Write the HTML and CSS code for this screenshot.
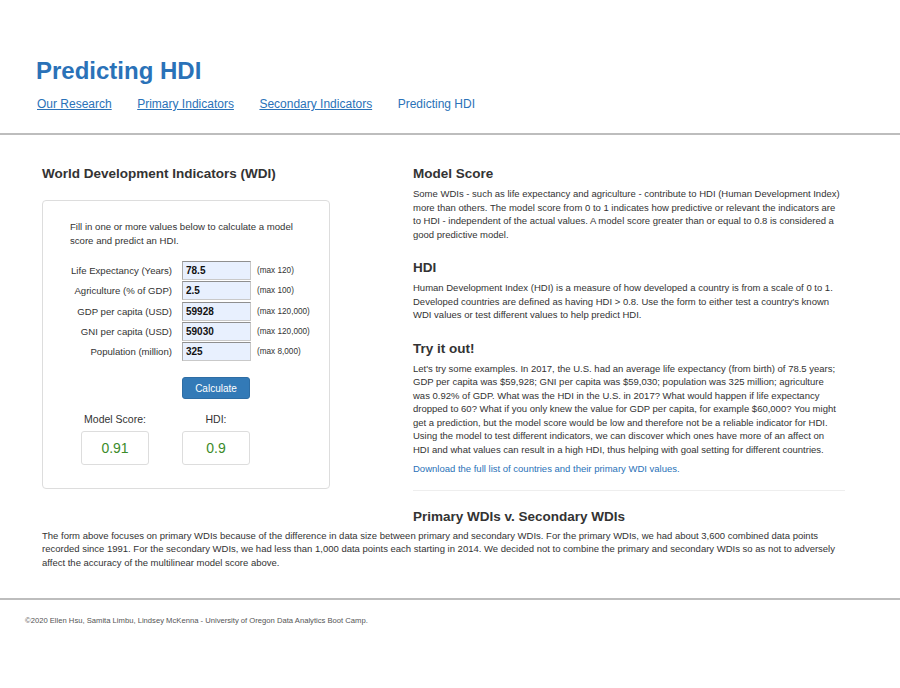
FILE: index.html
```html
<!DOCTYPE html>
<html lang="en">
<head>
<meta charset="utf-8">
<title>Predicting HDI</title>
<link rel="stylesheet" href="styles.css">
</head>
<body>
<header class="site-header">
  <h1 class="site-title">Predicting HDI</h1>
  <nav class="site-nav">
    <a href="#" class="nav-link">Our Research</a>
    <a href="#" class="nav-link">Primary Indicators</a>
    <a href="#" class="nav-link">Secondary Indicators</a>
    <a href="#" class="nav-link active">Predicting HDI</a>
  </nav>
</header>
<hr class="rule">
<main class="main">
  <div class="columns">
    <section class="left-col">
      <h3 class="heading">World Development Indicators (WDI)</h3>
      <div class="card">
        <p class="card-intro">Fill in one or more values below to calculate a model score and predict an HDI.</p>
        <form class="wdi-form">
          <label class="field-label">Life Expectancy (Years)</label>
          <input class="field-input" value="78.5">
          <span class="field-max">(max 120)</span>
          <label class="field-label">Agriculture (% of GDP)</label>
          <input class="field-input" value="2.5">
          <span class="field-max">(max 100)</span>
          <label class="field-label">GDP per capita (USD)</label>
          <input class="field-input" value="59928">
          <span class="field-max">(max 120,000)</span>
          <label class="field-label">GNI per capita (USD)</label>
          <input class="field-input" value="59030">
          <span class="field-max">(max 120,000)</span>
          <label class="field-label">Population (million)</label>
          <input class="field-input" value="325">
          <span class="field-max">(max 8,000)</span>
        </form>
        <button class="calc-btn" type="button">Calculate</button>
        <div class="results">
          <div class="result">
            <div class="result-label">Model Score:</div>
            <div class="result-box">0.91</div>
          </div>
          <div class="result">
            <div class="result-label">HDI:</div>
            <div class="result-box">0.9</div>
          </div>
        </div>
      </div>
    </section>
    <section class="right-col">
      <h3 class="heading">Model Score</h3>
      <p class="text">Some WDIs - such as life expectancy and agriculture - contribute to HDI (Human Development Index) more than others. The model score from 0 to 1 indicates how predictive or relevant the indicators are to HDI - independent of the actual values. A model score greater than or equal to 0.8 is considered a good predictive model.</p>
      <h3 class="heading spaced">HDI</h3>
      <p class="text">Human Development Index (HDI) is a measure of how developed a country is from a scale of 0 to 1. Developed countries are defined as having HDI &gt; 0.8. Use the form to either test a country's known WDI values or test different values to help predict HDI.</p>
      <h3 class="heading spaced">Try it out!</h3>
      <p class="text">Let's try some examples. In 2017, the U.S. had an average life expectancy (from birth) of 78.5 years; GDP per capita was $59,928; GNI per capita was $59,030; population was 325 million; agriculture was 0.92% of GDP. What was the HDI in the U.S. in 2017? What would happen if life expectancy dropped to 60? What if you only knew the value for GDP per capita, for example $60,000? You might get a prediction, but the model score would be low and therefore not be a reliable indicator for HDI. Using the model to test different indicators, we can discover which ones have more of an affect on HDI and what values can result in a high HDI, thus helping with goal setting for different countries.</p>
      <p class="text download"><a href="#" class="download-link">Download the full list of countries and their primary WDI values.</a></p>
      <hr class="divider">
      <h3 class="heading">Primary WDIs v. Secondary WDIs</h3>
    </section>
  </div>
  <p class="text wide">The form above focuses on primary WDIs because of the difference in data size between primary and secondary WDIs. For the primary WDIs, we had about 3,600 combined data points recorded since 1991. For the secondary WDIs, we had less than 1,000 data points each starting in 2014. We decided not to combine the primary and secondary WDIs so as not to adversely affect the accuracy of the multilinear model score above.</p>
</main>
<hr class="rule footer-rule">
<footer class="footer">©2020 Ellen Hsu, Samita Limbu, Lindsey McKenna - University of Oregon Data Analytics Boot Camp.</footer>
</body>
</html>
```
FILE: styles.css
```css
* { box-sizing: border-box; }
body {
  margin: 0;
  font-family: "Liberation Sans", Arial, sans-serif;
  color: #333;
  background: #fff;
}
.site-header {
  padding: 57px 0 0 36px;
}
.site-title {
  margin: 0;
  font-size: 24px;
  line-height: 28px;
  font-weight: bold;
  color: #2a72b8;
}
.site-nav {
  display: flex;
  gap: 25.5px;
  margin-top: 11px;
  padding-left: 1px;
}
.nav-link {
  font-size: 12px;
  line-height: 16px;
  color: #2a72b8;
  text-decoration: underline;
}
.nav-link.active { text-decoration: none; }
.rule {
  margin: 21px 0 0;
  border: 0;
  border-top: 2px solid #bdbdbd;
  height: 0;
}
.main {
  padding: 30px 0 0 42px;
  width: 848px;
}
.columns {
  display: flex;
  gap: 83px;
}
.left-col { width: 288px; flex: none; }
.right-col { width: 429px; flex: none; }
.heading {
  margin: 0;
  font-size: 13.5px;
  line-height: 18px;
  font-weight: bold;
  color: #333;
}
.heading.spaced { margin-top: 18px; }
.left-col .heading { margin-bottom: 17px; }
.card {
  border: 1px solid #ddd;
  border-radius: 4px;
  padding: 19px 10px 22px 27px;
  height: 289px;
}
.card-intro {
  margin: 0;
  font-size: 9.6px;
  line-height: 14px;
  color: #333;
  width: 232px;
}
.wdi-form {
  display: grid;
  grid-template-columns: 102px 69px auto;
  column-gap: 10px;
  row-gap: 1.3px;
  margin-top: 13px;
  align-items: center;
}
.field-label {
  font-size: 9.6px;
  text-align: right;
  white-space: nowrap;
  color: #333;
}
.field-input {
  width: 69px;
  height: 19px;
  margin: 0;
  padding: 0 3px;
  font-family: "Liberation Sans", Arial, sans-serif;
  font-size: 10px;
  font-weight: bold;
  color: #111;
  background: #e8f0fe;
  border: 1px solid #c9c9c9;
  border-top-color: #8f8f8f;
  border-left-color: #a9a9a9;
}
.field-max {
  font-size: 8.2px;
  color: #333;
  margin-left: -4px;
  white-space: nowrap;
}
.calc-btn {
  display: block;
  margin: 16px 0 0 112px;
  width: 68px;
  height: 22px;
  padding: 0;
  font-family: "Liberation Sans", Arial, sans-serif;
  font-size: 10px;
  color: #fff;
  background: #337ab7;
  border: 1px solid #2e6da4;
  border-radius: 3px;
}
.results {
  display: flex;
  gap: 33px;
  margin: 13px 0 0 11px;
}
.result {
  width: 68px;
  display: flex;
  flex-direction: column;
  align-items: center;
}
.result-label {
  font-size: 10.5px;
  line-height: 14px;
  white-space: nowrap;
  color: #333;
}
.result-box {
  margin-top: 5px;
  width: 68px;
  height: 34px;
  border: 1px solid #ddd;
  border-radius: 3px;
  display: flex;
  align-items: center;
  justify-content: center;
  font-size: 14px;
  color: #3c8b2a;
}
.text {
  margin: 4px 0 0;
  font-size: 9.5px;
  line-height: 13.5px;
  color: #333;
}
.text.download { margin-top: 6px; }
.download-link {
  color: #2a72b8;
  text-decoration: none;
}
.divider {
  margin: 14px 0 17px;
  width: 432px;
  border: 0;
  border-top: 1px solid #eee;
  height: 0;
}
.text.wide { margin-top: 3px; }
.footer-rule {
  margin-top: 29px;
}
.footer {
  padding: 16px 0 0 25px;
  font-size: 7.65px;
  line-height: 10px;
  color: #555;
}
```
